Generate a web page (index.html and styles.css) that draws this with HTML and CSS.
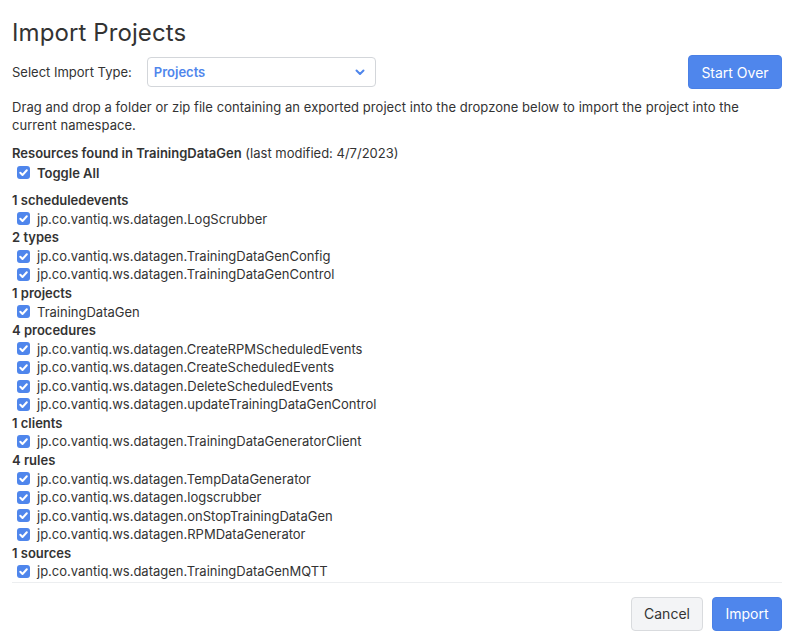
FILE: index.html
```html
<!DOCTYPE html>
<html>
<head>
<meta charset="utf-8">
<link rel="stylesheet" href="styles.css">
</head>
<body>
<div class="page">
  <h1 class="title">Import Projects</h1>
  <div class="toolbar">
    <label class="type-label">Select Import Type:</label>
    <div class="select">
      <span class="select-value">Projects</span>
      <svg class="chevron" width="10" height="7" viewBox="0 0 10 7"><path d="M1.5 1.5 L5 5 L8.5 1.5" fill="none" stroke="#4f86ec" stroke-width="2" stroke-linecap="round" stroke-linejoin="round"/></svg>
    </div>
    <div class="spacer"></div>
    <button class="btn btn-primary btn-start">Start Over</button>
  </div>
  <p class="desc">Drag and drop a folder or zip file containing an exported project into the dropzone below to import the project into the current namespace.</p>
  <div class="found"><b>Resources found in TrainingDataGen</b> (last modified: 4/7/2023)</div>
  <div class="row toggle"><span class="cb"></span><b>Toggle All</b></div>
  <div class="list" id="list"></div>
  <div class="footer">
    <button class="btn btn-default">Cancel</button>
    <button class="btn btn-primary">Import</button>
  </div>
</div>
<script src="app.js"></script>
</body>
</html>
```
FILE: app.js
```js
const groups = [
  ["1 scheduledevents", ["jp.co.vantiq.ws.datagen.LogScrubber"]],
  ["2 types", ["jp.co.vantiq.ws.datagen.TrainingDataGenConfig", "jp.co.vantiq.ws.datagen.TrainingDataGenControl"]],
  ["1 projects", ["TrainingDataGen"]],
  ["4 procedures", ["jp.co.vantiq.ws.datagen.CreateRPMScheduledEvents", "jp.co.vantiq.ws.datagen.CreateScheduledEvents", "jp.co.vantiq.ws.datagen.DeleteScheduledEvents", "jp.co.vantiq.ws.datagen.updateTrainingDataGenControl"]],
  ["1 clients", ["jp.co.vantiq.ws.datagen.TrainingDataGeneratorClient"]],
  ["4 rules", ["jp.co.vantiq.ws.datagen.TempDataGenerator", "jp.co.vantiq.ws.datagen.logscrubber", "jp.co.vantiq.ws.datagen.onStopTrainingDataGen", "jp.co.vantiq.ws.datagen.RPMDataGenerator"]],
  ["1 sources", ["jp.co.vantiq.ws.datagen.TrainingDataGenMQTT"]]
];
const list = document.getElementById("list");
for (const [h, items] of groups) {
  const hd = document.createElement("div");
  hd.className = "group-head";
  hd.textContent = h;
  list.appendChild(hd);
  for (const it of items) {
    const r = document.createElement("div");
    r.className = "row";
    const cb = document.createElement("span");
    cb.className = "cb";
    r.appendChild(cb);
    r.appendChild(document.createTextNode(it));
    list.appendChild(r);
  }
}
```
FILE: styles.css
```css
html, body { margin: 0; padding: 0; background: #fff; }
body {
  font-family: Inter, "Noto Sans", sans-serif;
  font-size: 13px;
  line-height: 18.57px;
  color: #333;
}
.page { padding: 18px 12px 0 12px; }
.title {
  font-size: 24px;
  font-weight: 400;
  line-height: 30px;
  margin: 0 0 7px 0;
  letter-spacing: 0.1px;
}
.toolbar { display: flex; align-items: center; height: 34px; }
.type-label { margin-right: 15px; }
.select {
  width: 229px;
  height: 30px;
  box-sizing: border-box;
  border: 1px solid #d3d6da;
  border-radius: 4px;
  display: flex;
  align-items: center;
  padding: 0 10px 0 6px;
}
.select-value { color: #4f86ec; font-weight: 600; flex: 1; }
.chevron { display: block; }
.spacer { flex: 1; }
.btn {
  font-family: Inter, "Noto Sans", sans-serif;
  font-size: 14px;
  height: 34px;
  box-sizing: border-box;
  border-radius: 4px;
  padding: 0 12px;
  cursor: pointer;
}
.btn-primary { background: #4f86ec; border: 1px solid #4a80e6; color: #fff; }
.btn-default { background: #f3f4f6; border: 1px solid #d9dbde; color: #333; }
.btn-start { width: 94px; padding: 0; }
.desc { margin: 9px 0 10px 0; line-height: 18px; max-width: 740px; letter-spacing: 0.05px; }
.found b { font-weight: 600; }
.row { display: flex; align-items: center; padding-left: 5px; }
.row b { font-weight: 600; }
.toggle { margin-top: 1px; margin-bottom: 9px; }
.cb {
  width: 13px; height: 13px;
  border-radius: 3px;
  background: #4f86ec;
  margin-right: 7px;
  flex: none;
  background-image: url("data:image/svg+xml;utf8,<svg xmlns='http://www.w3.org/2000/svg' viewBox='0 0 13 13'><path d='M3.3 6.8 L5.5 9 L9.8 4.3' fill='none' stroke='white' stroke-width='2' stroke-linecap='round' stroke-linejoin='round'/></svg>");
}
.group-head { font-weight: 600; }
.list { border-bottom: 1px solid #eceef0; padding-bottom: 1px; }
.footer {
  display: flex;
  justify-content: flex-end;
  gap: 9px;
  margin-top: 14px;
}
.footer .btn-default { width: 72px; padding: 0; }
.footer .btn-primary { width: 70px; padding: 0; }
```
